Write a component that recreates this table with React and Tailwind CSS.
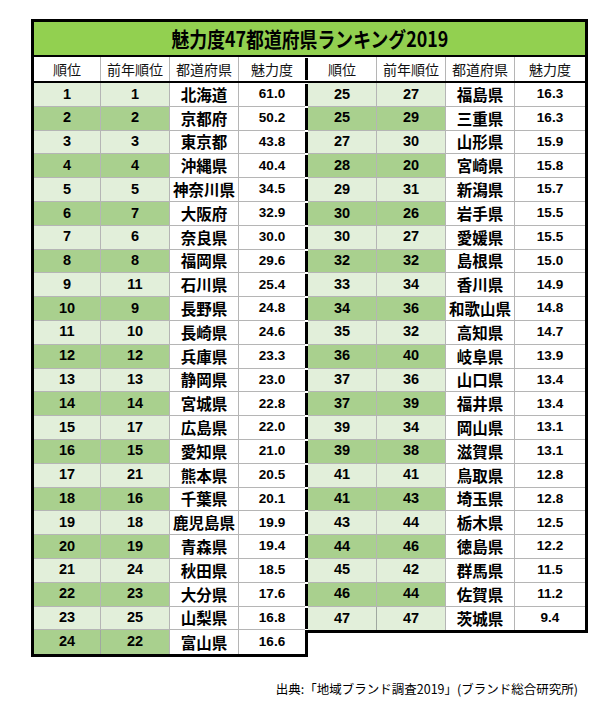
const left = [
  [1, 1, "北海道", "61.0"],
  [2, 2, "京都府", "50.2"],
  [3, 3, "東京都", "43.8"],
  [4, 4, "沖縄県", "40.4"],
  [5, 5, "神奈川県", "34.5"],
  [6, 7, "大阪府", "32.9"],
  [7, 6, "奈良県", "30.0"],
  [8, 8, "福岡県", "29.6"],
  [9, 11, "石川県", "25.4"],
  [10, 9, "長野県", "24.8"],
  [11, 10, "長崎県", "24.6"],
  [12, 12, "兵庫県", "23.3"],
  [13, 13, "静岡県", "23.0"],
  [14, 14, "宮城県", "22.8"],
  [15, 17, "広島県", "22.0"],
  [16, 15, "愛知県", "21.0"],
  [17, 21, "熊本県", "20.5"],
  [18, 16, "千葉県", "20.1"],
  [19, 18, "鹿児島県", "19.9"],
  [20, 19, "青森県", "19.4"],
  [21, 24, "秋田県", "18.5"],
  [22, 23, "大分県", "17.6"],
  [23, 25, "山梨県", "16.8"],
  [24, 22, "富山県", "16.6"],
]

const right = [
  [25, 27, "福島県", "16.3"],
  [25, 29, "三重県", "16.3"],
  [27, 30, "山形県", "15.9"],
  [28, 20, "宮崎県", "15.8"],
  [29, 31, "新潟県", "15.7"],
  [30, 26, "岩手県", "15.5"],
  [30, 27, "愛媛県", "15.5"],
  [32, 32, "島根県", "15.0"],
  [33, 34, "香川県", "14.9"],
  [34, 36, "和歌山県", "14.8"],
  [35, 32, "高知県", "14.7"],
  [36, 40, "岐阜県", "13.9"],
  [37, 36, "山口県", "13.4"],
  [37, 39, "福井県", "13.4"],
  [39, 34, "岡山県", "13.1"],
  [39, 38, "滋賀県", "13.1"],
  [41, 41, "鳥取県", "12.8"],
  [41, 43, "埼玉県", "12.8"],
  [43, 44, "栃木県", "12.5"],
  [44, 46, "徳島県", "12.2"],
  [45, 42, "群馬県", "11.5"],
  [46, 44, "佐賀県", "11.2"],
  [47, 47, "茨城県", "9.4"],
]

const num = { fontFamily: '"Liberation Sans", Arial, sans-serif' }
const jp = { fontFamily: '"Noto Sans CJK JP", "Noto Sans", sans-serif' }

function Divider({ solid }) {
  return (
    <div className={solid ? "w-[3px] self-stretch bg-black" : "w-[3px] self-stretch py-[1px]"}>
      {!solid && <div className="h-full bg-black" />}
    </div>
  )
}

function Header({ widths, divider }) {
  const labels = ["順位", "前年順位", "都道府県", "魅力度"]
  return (
    <div className="flex h-[26px] border-b-2 border-black bg-white">
      {labels.map((l, i) => (
        <div
          key={l}
          style={{ ...jp, width: widths[i] }}
          className={
            "flex items-center justify-center text-[14px] text-[#111] " +
            (i < 3 ? "border-r border-[#b5b5b5]" : "")
          }
        >
          {l}
        </div>
      ))}
      {divider && <Divider />}
    </div>
  )
}

function Row({ row, idx, widths, divider, last, solid }) {
  const green = idx % 2 === 0 ? "bg-[#e2efda]" : "bg-[#a9d08e]"
  const line = last ? "" : "border-b border-[#b5b5b5]"
  return (
    <div className="flex h-[23.8px]">
      <div style={{ ...num, width: widths[0] }} className={`flex items-center justify-center text-[14.5px] font-bold border-r border-[#a0a8a0] ${green} ${line}`}>
        {row[0]}
      </div>
      <div style={{ ...num, width: widths[1] }} className={`flex items-center justify-center text-[14.5px] font-bold border-r border-[#b5b5b5] ${green} ${line}`}>
        {row[1]}
      </div>
      <div style={{ ...jp, width: widths[2] }} className={`flex items-center justify-center text-[15.5px] font-bold bg-white border-r border-[#b5b5b5] ${line}`}>
        {row[2]}
      </div>
      <div style={{ ...num, width: widths[3] }} className={`flex items-center justify-center text-[13.5px] font-bold bg-white ${line}`}>
        {row[3]}
      </div>
      {divider && <Divider solid={solid} />}
    </div>
  )
}

export default function App() {
  const lw = [67, 69, 69, 66]
  const rw = [69, 69, 69, 70]
  return (
    <div className="w-[615px] h-[716px] bg-white text-black">
      <div className="pt-[19px] pl-[31px]">
        <div className="w-[557px]">
          {/* title */}
          <div className="h-[38px] border-[3px] border-b-2 border-black bg-[#92d050] flex items-center justify-center">
            <span style={jp} className="inline-block text-[21px] font-bold leading-none scale-x-[0.85]">
              魅力度47都道府県ランキング2019
            </span>
          </div>

          <div className="flex items-start">
            {/* left half */}
            <div className="border-l-[3px] border-b-[3px] border-black">
              <Header widths={lw} divider />
              {left.map((r, i) => (
                <Row key={i} row={r} idx={i} widths={lw} divider last={i === left.length - 1} solid={i === left.length - 1} />
              ))}
            </div>

            {/* right half */}
            <div className="border-r-[3px] border-b-[3px] border-black">
              <Header widths={rw} />
              {right.map((r, i) => (
                <Row key={i} row={r} idx={i} widths={rw} last={i === right.length - 1} />
              ))}
            </div>
          </div>
        </div>

        <div className="w-[547px] mt-[26px] flex justify-end">
          <span style={jp} className="text-[12.5px] leading-none">
            出典:「地域ブランド調査2019」(ブランド総合研究所)
          </span>
        </div>
      </div>
    </div>
  )
}
